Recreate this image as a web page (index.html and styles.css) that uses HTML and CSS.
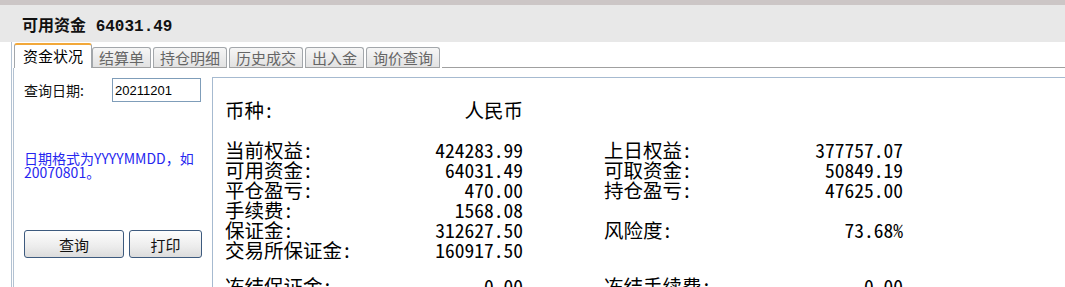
FILE: index.html
```html
<!DOCTYPE html>
<html lang="zh-CN">

<head>
    <meta charset="UTF-8">
    <meta name="viewport" content="width=device-width, initial-scale=1.0">
    <title>资金状况</title>
    <link rel="stylesheet" href="styles.css">
</head>

<body>
    <div class="topline"></div>
    <div class="titlebar">
        <span class="title-label">可用资金</span>
        <span class="title-num">64031.49</span>
    </div>
    <div class="workspace">
        <div class="tabbar">
            <div class="tab active">资金状况</div>
            <div class="tab">结算单</div>
            <div class="tab">持仓明细</div>
            <div class="tab">历史成交</div>
            <div class="tab">出入金</div>
            <div class="tab">询价查询</div>
            <div class="tab-fill"></div>
        </div>
        <div class="pane">
            <div class="query">
                <div class="query-row">
                    <label for="date">查询日期:</label>
                    <input id="date" type="text" value="20211201">
                </div>
                <div class="hint">日期格式为YYYYMMDD，如<br>20070801。</div>
                <div class="buttons">
                    <button class="btn btn-query">查询</button>
                    <button class="btn btn-print">打印</button>
                </div>
            </div>
            <div class="report">
                <div class="sheet">
                    <div class="cell"><span>币种:</span><span>人民币</span></div>
                    <div class="cell"></div>
                    <div class="cell"></div>
                    <div class="cell"></div>

                    <div class="cell"><span>当前权益:</span><span>424283.99</span></div>
                    <div class="cell"><span>上日权益:</span><span>377757.07</span></div>
                    <div class="cell"><span>可用资金:</span><span>64031.49</span></div>
                    <div class="cell"><span>可取资金:</span><span>50849.19</span></div>
                    <div class="cell"><span>平仓盈亏:</span><span>470.00</span></div>
                    <div class="cell"><span>持仓盈亏:</span><span>47625.00</span></div>
                    <div class="cell"><span>手续费:</span><span>1568.08</span></div>
                    <div class="cell"></div>
                    <div class="cell"><span>保证金:</span><span>312627.50</span></div>
                    <div class="cell"><span>风险度:</span><span>73.68%</span></div>
                    <div class="cell"><span>交易所保证金:</span><span>160917.50</span></div>
                    <div class="cell"></div>
                </div>
                <div class="sheet sheet-frozen">
                    <div class="cell"><span>冻结保证金:</span><span>0.00</span></div>
                    <div class="cell"><span>冻结手续费:</span><span>0.00</span></div>
                </div>
            </div>
        </div>
    </div>
</body>

</html>
```

FILE: styles.css
```css
* {
    padding: 0;
    margin: 0;
    box-sizing: border-box;
}

body {
    width: 1065px;
    height: 287px;
    overflow: hidden;
    background: #fff;
    font-family: "Noto Sans CJK SC", "Noto Sans", sans-serif;
    color: #000;
}

.topline {
    height: 5px;
    background: #ccc6c6;
}

.titlebar {
    height: 37px;
    background: #e8e8e8;
    padding: 9px 0 0 22px;
    font-size: 16px;
    line-height: 20px;
    font-weight: bold;
    color: #111;
}

.title-num {
    font-family: "Liberation Mono", monospace;
    margin-left: 6px;
}

.workspace {
    margin-left: 11px;
    border-left: 1px solid #b3c2d2;
    height: 245px;
    display: flex;
    flex-direction: column;
}

.tabbar {
    display: flex;
    align-items: flex-end;
    height: 26px;
    padding-left: 2px;
    padding-top: 1px;
}

.tab {
    height: 21px;
    margin-right: 2px;
    padding: 0 6px;
    border: 1px solid #a3a7ab;
    border-bottom: 1px solid #a0a0a0;
    border-radius: 3px 3px 0 0;
    background: linear-gradient(#f6f6f6, #e2e2e2);
    color: #666;
    font-size: 15px;
    line-height: 19px;
}

.tab.active {
    height: 25px;
    margin-right: 0;
    padding: 0 8px;
    border-top: 2px solid #f2a83a;
    border-bottom: none;
    background: #fff;
    color: #000;
    line-height: 21px;
}

.tab-fill {
    flex: 1;
    align-self: stretch;
    border-bottom: 1px solid #a0a0a0;
}

.tab:not(.active) + .tab,
.tab.active + .tab {
    margin-left: 0;
}

.pane {
    flex: 1;
    display: flex;
    margin-left: 1px;
    border-left: 1px solid #b3c2d2;
}

.query {
    width: 198px;
    padding: 10px 0 0 10px;
}

.query-row {
    display: flex;
    align-items: center;
    height: 24px;
}

.query-row label {
    width: 88px;
    font-size: 14px;
    color: #111;
}

.query-row input {
    width: 89px;
    height: 24px;
    border: 1px solid #7f9db9;
    padding: 0 2px;
    font-family: "Liberation Sans", sans-serif;
    font-size: 13px;
    color: #000;
    outline: none;
}

.hint {
    margin-top: 49px;
    font-size: 14px;
    line-height: 14px;
    color: #2626f0;
    white-space: nowrap;
}

.buttons {
    display: flex;
    margin-top: 51px;
}

.btn {
    height: 28px;
    border: 1px solid #3d5a7e;
    border-radius: 3px;
    background: linear-gradient(#fdfdfd, #ececec 60%, #dcdcdc);
    font-family: "Noto Sans CJK SC", sans-serif;
    font-size: 15px;
    color: #111;
    cursor: pointer;
}

.btn-query {
    width: 100px;
}

.btn-print {
    width: 73px;
    margin-left: 5px;
}

.report {
    flex: 1;
    margin-top: 9px;
    border-top: 1px solid #a6bad0;
    border-left: 1px solid #a6bad0;
    padding: 22px 0 0 12px;
}

.sheet {
    display: grid;
    grid-template-columns: 298px 299px;
    column-gap: 81px;
    font-size: 19.5px;
    line-height: 20px;
    font-feature-settings: "hwid" 1;
}

.cell {
    height: 20px;
    display: flex;
    justify-content: space-between;
    white-space: nowrap;
}

.sheet-frozen {
    margin-top: 16px;
}
```
